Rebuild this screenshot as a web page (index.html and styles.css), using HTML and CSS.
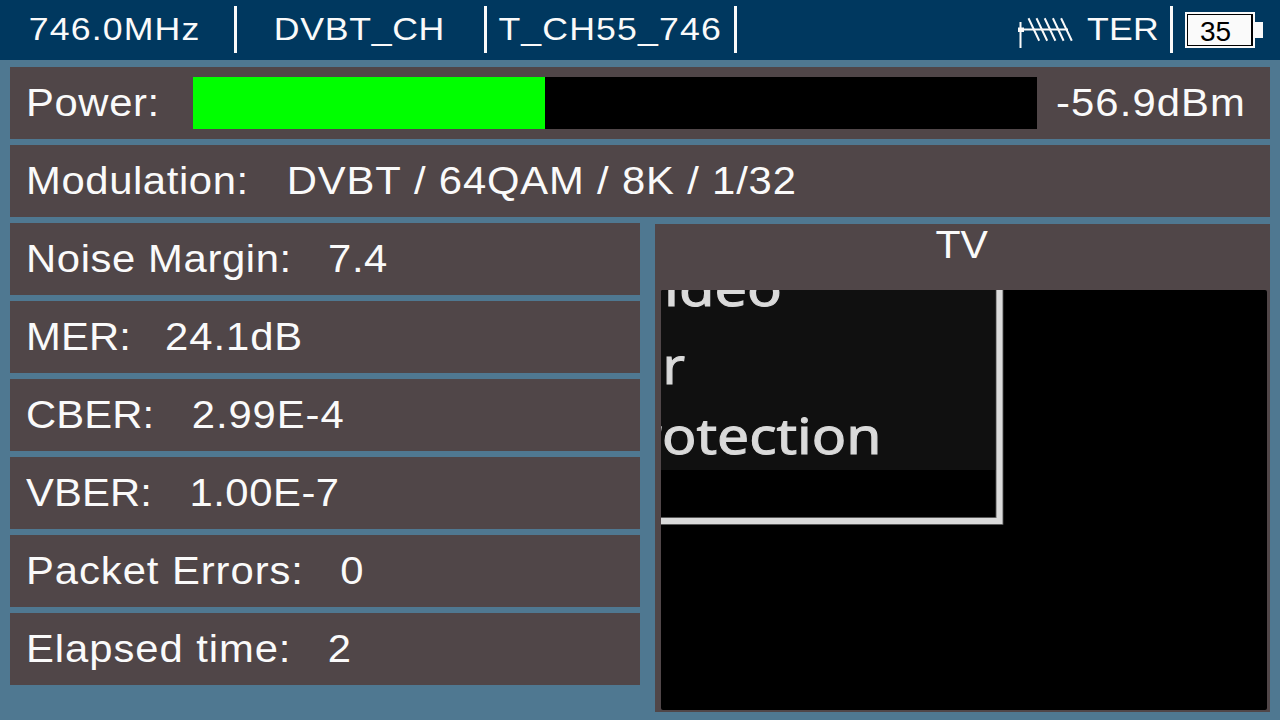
FILE: index.html
```html
<!DOCTYPE html>
<html lang="en">
<head>
<meta charset="utf-8">
<title>Signal Meter</title>
<link rel="stylesheet" href="styles.css">
</head>
<body>
<header class="topbar">
  <div class="cell cell-freq"><span class="wide">746.0MHz</span></div>
  <div class="cell cell-channel"><span class="wide">DVBT_CH</span></div>
  <div class="cell"><span class="wide">T_CH55_746</span></div>
  <div class="source">
    <svg class="antenna" width="58" height="34" viewBox="0 0 58 34" fill="none" stroke="#fafafa">
      <path d="M5.500 6V32" stroke-width="2"/>
      <path d="M5 13.500H53" stroke-width="2"/>
      <rect x="3" y="11.500" width="6" height="4.500" fill="#fafafa" stroke="none"/>
      <path d="M13.500 2.200L24.200 24.700M21.500 2.200L32.200 24.700M29.700 2.200L40.400 24.700M37.900 2.200L48.600 24.700M46.100 2.200L56.800 24.700" stroke-width="2"/>
    </svg>
    <span class="wide ter">TER</span>
  </div>
  <div class="battery"><div class="battery-body"><span>35</span></div><div class="battery-tip"></div></div>
</header>
<main class="main">
  <section class="row power">
    <div class="power-label"><div class="line medium">Power:</div></div>
    <div class="meter"><div class="meter-fill" style="width:41.7%"></div></div>
    <div class="line level">-56.9dBm</div>
  </section>
  <section class="row"><div class="line medium">Modulation:<span class="value modulation">DVBT / 64QAM / 8K / 1/32</span></div></section>
  <div class="columns">
    <div class="readings">
      <div class="row"><div class="line medium">Noise Margin:<span class="value">7.4</span></div></div>
      <div class="row"><div class="line tight">MER:<span class="value near">24.1dB</span></div></div>
      <div class="row"><div class="line tight">CBER:<span class="value">2.99E-4</span></div></div>
      <div class="row"><div class="line tight">VBER:<span class="value vber">1.00E-7</span></div></div>
      <div class="row"><div class="line">Packet Errors:<span class="value">0</span></div></div>
      <div class="row"><div class="line">Elapsed time:<span class="value">2</span></div></div>
    </div>
    <section class="tv">
      <div class="tv-title">TV</div>
      <svg class="screen" width="606" height="420" viewBox="0 0 606 420">
        <rect width="606" height="420" fill="#000"/>
        <rect width="334" height="180" fill="#101010"/>
        <path d="M338.500 0V231H0" fill="none" stroke="#777" stroke-width="7.600"/>
        <path d="M338.500 0V231H0" fill="none" stroke="#dadada" stroke-width="5.800"/>
        <g class="picture-text">
          <text x="3" y="15.500" textLength="118" lengthAdjust="spacingAndGlyphs">ideo</text>
          <text x="1.500" y="93.500" textLength="22.500" lengthAdjust="spacingAndGlyphs">r</text>
          <text x="-22.500" y="164" textLength="243" lengthAdjust="spacingAndGlyphs">rotection</text>
        </g>
      </svg>
    </section>
  </div>
</main>
</body>
</html>
```
FILE: styles.css
```css
* { box-sizing: border-box; }

body {
  margin: 0;
  width: 1280px;
  height: 720px;
  overflow: hidden;
  background: #4f7891;
  color: #fafafa;
  font-family: "Liberation Sans", Arial, sans-serif;
  font-kerning: none;
}

.topbar {
  height: 60px;
  display: flex;
  align-items: flex-start;
  padding-top: 6px;
  background: #00385f;
}

.cell {
  width: 250px;
  height: 47px;
  display: flex;
  justify-content: center;
  border-right: 3px solid #fafafa;
}

.cell-freq { width: 237px; padding-right: 4px; }

.cell-channel { padding-right: 3px; }

.wide {
  font-size: 31px;
  line-height: 47px;
  letter-spacing: 1px;
  white-space: nowrap;
  transform: scaleX(1.15);
}

.cell-channel .wide { letter-spacing: 0.600px; }

.source {
  height: 47px;
  margin-left: auto;
  display: flex;
  align-items: flex-start;
  border-right: 3px solid #fafafa;
}

.antenna { margin-top: 10px; }

.ter {
  margin-left: 14px;
  width: 83px;
  letter-spacing: 0.200px;
  transform-origin: left;
}

.battery {
  display: flex;
  align-items: center;
  margin: 6px 17px 0 12px;
}

.battery-body {
  width: 70px;
  height: 36px;
  padding: 2px;
  background: #fafafa;
  color: #000;
  font-size: 28px;
}

.battery-body span {
  display: block;
  height: 32px;
  line-height: 33px;
  padding-left: 12px;
  border: 1px solid #000;
  border-right-width: 2px;
}

.battery-tip {
  width: 8px;
  height: 16px;
  background: #fafafa;
}

.main {
  display: flex;
  flex-direction: column;
  gap: 6px;
  padding: 7px 10px 0;
}

.row {
  height: 72px;
  padding-left: 15.500px;
  background: #504648;
}

.line {
  width: fit-content;
  font-size: 38px;
  line-height: 73px;
  letter-spacing: 0.850px;
  white-space: nowrap;
  transform: scaleX(1.1);
  transform-origin: left;
}

.medium { letter-spacing: 0.550px; }
.tight { letter-spacing: 0.100px; }

.value { margin-left: 33px; }
.tight .value { margin-left: 34px; letter-spacing: 0.850px; }
.tight .near { margin-left: 31px; }
.tight .vber { letter-spacing: 0.500px; }
.modulation { margin-left: 34.500px; letter-spacing: 0.750px; }

.power { display: flex; }

.power-label { width: 167.500px; }

.meter {
  width: 844px;
  height: 52px;
  margin-top: 10px;
  background: #000;
}

.meter-fill {
  height: 100%;
  background: #0f0;
}

.level { margin-left: 18.500px; letter-spacing: 1px; }

.columns {
  display: flex;
  gap: 15px;
}

.readings {
  width: 630px;
  display: flex;
  flex-direction: column;
  gap: 6px;
}

.tv {
  width: 615px;
  height: 488px;
  margin-top: 1px;
  padding-left: 6px;
  background: #504648;
}

.tv-title {
  height: 66px;
  padding-right: 7px;
  font-size: 38px;
  line-height: 43px;
  text-align: center;
  transform: scaleX(1.08);
}

.screen {
  display: block;
  border-radius: 2px;
}

.picture-text {
  font-family: "Noto Sans", "Open Sans", sans-serif;
  font-size: 49px;
  fill: #dadada;
  stroke: #dadada;
  stroke-width: 1px;
}
```
